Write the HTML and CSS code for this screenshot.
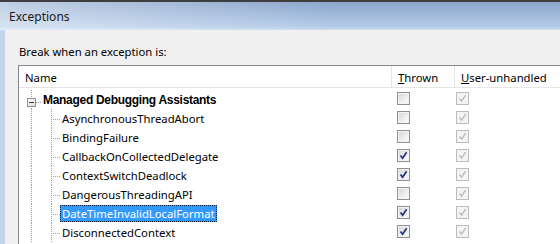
FILE: index.html
```html
<!DOCTYPE html>
<html lang="en">
<head>
  <meta charset="UTF-8">
  <title>Exceptions</title>
  <link rel="stylesheet" href="styles.css">
</head>
<body>
  <div class="exceptions-dialog">
    <div class="exceptions-titlebar">
      <span class="exceptions-title">Exceptions</span>
    </div>
    <div class="exceptions-frame">
      <div class="exceptions-client">
        <div class="exceptions-prompt">Break when an exception is:</div>
        <div class="exceptions-list">
          <div class="exceptions-list-header">
            <div class="exceptions-col exceptions-col-name">Name</div>
            <div class="exceptions-col exceptions-col-sep"><u>T</u>hrown</div>
            <div class="exceptions-col exceptions-col-sep"><u>U</u>ser-unhandled</div>
          </div>
          <div class="exceptions-list-body">
            <div class="exceptions-row exceptions-group">
              <div class="exceptions-name">
                <span class="exceptions-expander"></span>
                <span class="exceptions-label">Managed Debugging Assistants</span>
              </div>
              <div class="exceptions-cell-thrown"><span class="exceptions-check"></span></div>
              <div class="exceptions-cell-unhandled"><span class="exceptions-check is-disabled is-checked"><svg viewBox="0 0 13 13"><path d="M3.5 6.5 L5.6 9.2 L9.6 3.2"/></svg></span></div>
            </div>
            <div class="exceptions-row exceptions-child">
              <div class="exceptions-name"><span class="exceptions-label">AsynchronousThreadAbort</span></div>
              <div class="exceptions-cell-thrown"><span class="exceptions-check"></span></div>
              <div class="exceptions-cell-unhandled"><span class="exceptions-check is-disabled is-checked"><svg viewBox="0 0 13 13"><path d="M3.5 6.5 L5.6 9.2 L9.6 3.2"/></svg></span></div>
            </div>
            <div class="exceptions-row exceptions-child">
              <div class="exceptions-name"><span class="exceptions-label">BindingFailure</span></div>
              <div class="exceptions-cell-thrown"><span class="exceptions-check"></span></div>
              <div class="exceptions-cell-unhandled"><span class="exceptions-check is-disabled is-checked"><svg viewBox="0 0 13 13"><path d="M3.5 6.5 L5.6 9.2 L9.6 3.2"/></svg></span></div>
            </div>
            <div class="exceptions-row exceptions-child">
              <div class="exceptions-name"><span class="exceptions-label">CallbackOnCollectedDelegate</span></div>
              <div class="exceptions-cell-thrown"><span class="exceptions-check is-checked"><svg viewBox="0 0 13 13"><path d="M3.5 6.5 L5.6 9.2 L9.6 3.2"/></svg></span></div>
              <div class="exceptions-cell-unhandled"><span class="exceptions-check is-disabled is-checked"><svg viewBox="0 0 13 13"><path d="M3.5 6.5 L5.6 9.2 L9.6 3.2"/></svg></span></div>
            </div>
            <div class="exceptions-row exceptions-child">
              <div class="exceptions-name"><span class="exceptions-label">ContextSwitchDeadlock</span></div>
              <div class="exceptions-cell-thrown"><span class="exceptions-check is-checked"><svg viewBox="0 0 13 13"><path d="M3.5 6.5 L5.6 9.2 L9.6 3.2"/></svg></span></div>
              <div class="exceptions-cell-unhandled"><span class="exceptions-check is-disabled is-checked"><svg viewBox="0 0 13 13"><path d="M3.5 6.5 L5.6 9.2 L9.6 3.2"/></svg></span></div>
            </div>
            <div class="exceptions-row exceptions-child">
              <div class="exceptions-name"><span class="exceptions-label">DangerousThreadingAPI</span></div>
              <div class="exceptions-cell-thrown"><span class="exceptions-check"></span></div>
              <div class="exceptions-cell-unhandled"><span class="exceptions-check is-disabled is-checked"><svg viewBox="0 0 13 13"><path d="M3.5 6.5 L5.6 9.2 L9.6 3.2"/></svg></span></div>
            </div>
            <div class="exceptions-row exceptions-child">
              <div class="exceptions-name"><span class="exceptions-label is-selected">DateTimeInvalidLocalFormat</span></div>
              <div class="exceptions-cell-thrown"><span class="exceptions-check is-checked"><svg viewBox="0 0 13 13"><path d="M3.5 6.5 L5.6 9.2 L9.6 3.2"/></svg></span></div>
              <div class="exceptions-cell-unhandled"><span class="exceptions-check is-disabled is-checked"><svg viewBox="0 0 13 13"><path d="M3.5 6.5 L5.6 9.2 L9.6 3.2"/></svg></span></div>
            </div>
            <div class="exceptions-row exceptions-child">
              <div class="exceptions-name"><span class="exceptions-label">DisconnectedContext</span></div>
              <div class="exceptions-cell-thrown"><span class="exceptions-check is-checked"><svg viewBox="0 0 13 13"><path d="M3.5 6.5 L5.6 9.2 L9.6 3.2"/></svg></span></div>
              <div class="exceptions-cell-unhandled"><span class="exceptions-check is-disabled is-checked"><svg viewBox="0 0 13 13"><path d="M3.5 6.5 L5.6 9.2 L9.6 3.2"/></svg></span></div>
            </div>
          </div>
        </div>
      </div>
    </div>
  </div>
</body>
</html>
```

FILE: styles.css
```css
body {
  margin: 0;
  width: 560px;
  height: 244px;
  overflow: hidden;
  font-family: "Noto Sans", sans-serif;
  font-size: 11.3px;
  color: #000;
}

.exceptions-dialog {
  width: 560px;
  height: 244px;
  display: flex;
  flex-direction: column;
  overflow: hidden;
}

.exceptions-titlebar {
  flex-shrink: 0;
  height: 28px;
  border-top: 2px solid #3e3e3e;
  display: flex;
  align-items: center;
  padding-left: 9px;
  font-size: 12px;
  background:
    linear-gradient(to right, rgba(255, 255, 255, 0.45), rgba(255, 255, 255, 0) 60%),
    linear-gradient(to bottom, #8aa6cc, #b5cce9 90%, #cfdff0);
}

.exceptions-title {
  color: #1a1a1a;
  margin-top: 1px;
}

.exceptions-frame {
  flex: 1;
  min-height: 0;
  display: flex;
  padding-left: 5px;
  background: #c2d5ec;
}

.exceptions-client {
  flex: 1;
  min-width: 0;
  overflow: hidden;
  background: #f0f0f0;
  padding: 14px 0 0 13px;
}

.exceptions-prompt {
  line-height: 16px;
  padding-left: 1px;
  margin-bottom: 5px;
}

.exceptions-list {
  width: 600px;
  height: 200px;
  background: #fff;
  border: 1px solid #828790;
}

.exceptions-list-header {
  display: grid;
  grid-template-columns: 372px 63px 1fr;
  height: 21px;
  border-bottom: 1px solid #e5e5e5;
}

.exceptions-col {
  display: flex;
  align-items: center;
  padding: 2px 0 0 6px;
}

.exceptions-col-sep {
  border-left: 1px solid #e5e5e5;
}

.exceptions-list-body {
  padding-top: 2px;
}

.exceptions-row {
  display: grid;
  grid-template-columns: 372px 63px 1fr;
  height: 19px;
}

.exceptions-name {
  display: flex;
  align-items: center;
}

.exceptions-group .exceptions-name {
  padding-left: 8px;
  background:
    repeating-linear-gradient(to bottom, #a0a0a0 0 1px, transparent 1px 2px) 12px 0 / 1px 100% no-repeat,
    repeating-linear-gradient(to right, #a0a0a0 0 1px, transparent 1px 2px) 17px 12px / 6px 1px no-repeat;
}

.exceptions-group .exceptions-label {
  font-family: "Liberation Sans", sans-serif;
  font-size: 12px;
  font-weight: bold;
  letter-spacing: -0.3px;
  margin-left: 5px;
  margin-top: 2px;
}

.exceptions-expander {
  width: 7px;
  height: 7px;
  margin-top: 6px;
  border: 1px solid #919191;
  background: linear-gradient(135deg, #ffffff, #dcdcdc);
  display: flex;
  align-items: center;
  justify-content: center;
}

.exceptions-expander::before {
  content: "";
  width: 5px;
  height: 1px;
  background: #3c3c3c;
}

.exceptions-child .exceptions-name {
  padding-left: 41px;
  background:
    repeating-linear-gradient(to bottom, #a0a0a0 0 1px, transparent 1px 2px) 12px 0 / 1px 100% no-repeat,
    repeating-linear-gradient(to bottom, #a0a0a0 0 1px, transparent 1px 2px) 32px 0 / 1px 100% no-repeat,
    repeating-linear-gradient(to right, #a0a0a0 0 1px, transparent 1px 2px) 34px 10px / 7px 1px no-repeat;
}

.exceptions-label {
  padding: 0 2px;
  line-height: 17px;
  white-space: nowrap;
}

.exceptions-label.is-selected {
  background: #3399ff;
  color: #fff;
  outline: 1px dotted #0c1f33;
  outline-offset: -1px;
}

.exceptions-cell-thrown {
  padding: 2px 0 0 6px;
}

.exceptions-cell-unhandled {
  padding: 2px 0 0 2px;
}

.exceptions-check {
  display: block;
  width: 11px;
  height: 11px;
  border: 1px solid #8f8f8f;
  background: linear-gradient(135deg, #d2d2d2, #f4f4f4 70%);
  box-shadow: inset 0 0 0 1px #f4f4f4;
}

.exceptions-check svg {
  display: block;
  width: 13px;
  height: 13px;
  margin: -1px;
  fill: none;
  stroke: #25397f;
  stroke-width: 1.8;
}

.exceptions-check.is-disabled {
  border-color: #bcbcbc;
  background: #f4f4f4;
}

.exceptions-check.is-disabled svg {
  stroke: #b8b8b8;
  stroke-width: 1.3;
}
```
